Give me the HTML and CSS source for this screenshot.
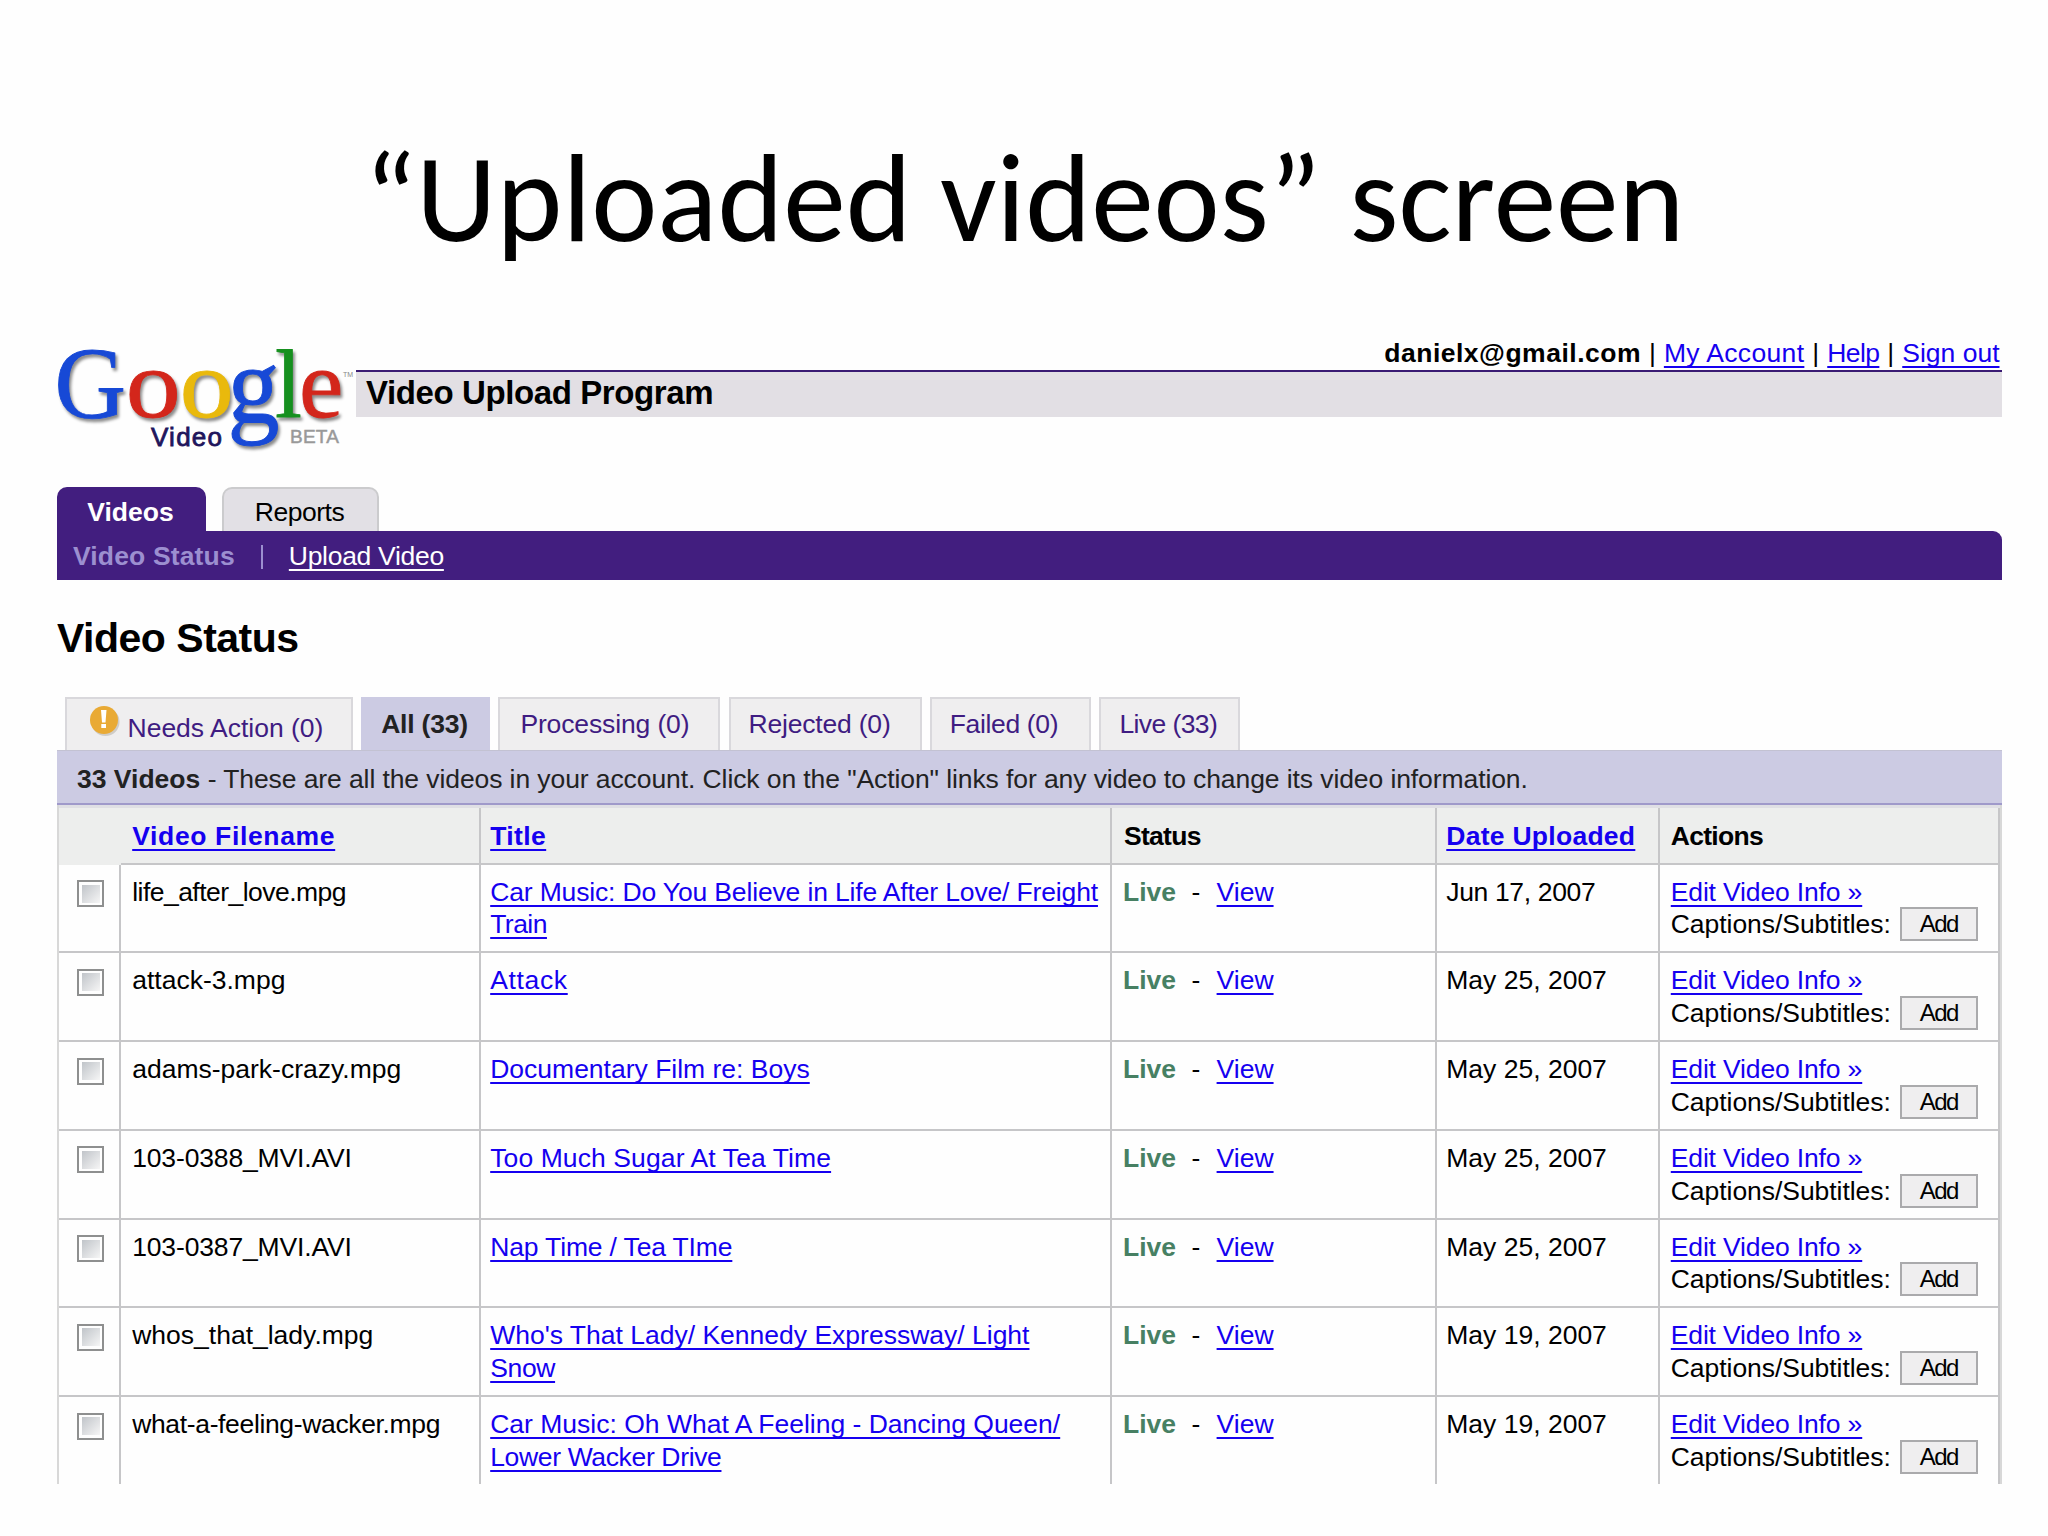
FILE: index.html
```html
<!DOCTYPE html>
<html lang="en">
<head>
    <meta charset="UTF-8">
    <meta name="viewport" content="width=device-width, initial-scale=1.0">
    <title>Video Upload Program</title>
    <link rel="stylesheet" href="styles.css">
</head>
<body>
    <h1 class="slide-title">“Uploaded videos” screen</h1>

    <div class="page">
        <header class="header">
            <svg class="logo" width="299" height="120" viewBox="0 0 299 120">
                <g class="logo-google">
                    <text class="blue" transform="translate(-2.500 78) scale(.99 1.01)">G</text>
                    <text class="red" transform="translate(68.800 77) scale(1.1 .97)">o</text>
                    <text class="yellow" transform="translate(122.800 77) scale(1.08 .97)">o</text>
                    <text class="blue" transform="translate(170.500 82.500) scale(1.04 1.1)">g</text>
                    <text class="green" transform="translate(218 76.500) scale(.97 .97)">l</text>
                    <text class="red" transform="translate(242 77) scale(1 .97)">e</text>
                </g>
                <text class="logo-video" x="94" y="106" textLength="71">Video</text>
                <text class="logo-beta" x="233" y="102.500" textLength="49">BETA</text>
                <text class="logo-tm" x="286" y="37">TM</text>
            </svg>
            <div class="header-main">
                <div class="account">
                    <b>danielx@gmail.com</b>
                    <span>|</span>
                    <a class="my-account" href="#">My Account</a>
                    <span>|</span>
                    <a class="help" href="#">Help</a>
                    <span>|</span>
                    <a href="#">Sign out</a>
                </div>
                <div class="program">Video Upload Program</div>
            </div>
        </header>

        <nav class="nav">
            <div class="nav-tab active">Videos</div>
            <div class="nav-tab reports">Reports</div>
        </nav>
        <div class="subnav">
            <b>Video Status</b>
            <span class="divider"></span>
            <a href="#">Upload Video</a>
        </div>

        <h2>Video Status</h2>

        <div class="tabs">
            <div class="tab needs-action">
                <svg class="warn" width="32" height="32" viewBox="0 0 32 32">
                    <circle cx="16.500" cy="17" r="14" fill="#b9b5ad" opacity=".6"/>
                    <circle cx="15" cy="15" r="14" fill="#e9aa35"/>
                    <path d="M12 5h5.500l-1 12.500h-3.500zM12.300 19h4.700v4h-4.700z" fill="#fff"/>
                </svg>
                <span>Needs Action (0)</span>
            </div>
            <div class="tab all">All (33)</div>
            <div class="tab processing">Processing (0)</div>
            <div class="tab rejected">Rejected (0)</div>
            <div class="tab failed">Failed (0)</div>
            <div class="tab live-tab">Live (33)</div>
        </div>
        <div class="info"><b>33 Videos</b> <span>- These are all the videos in your account. Click on the "Action" links for any video to change its video information.</span></div>

        <table class="videos">
            <thead>
                <tr>
                    <th></th>
                    <th><a class="wide" href="#">Video Filename</a></th>
                    <th><a class="title-link" href="#">Title</a></th>
                    <th class="narrow">Status</th>
                    <th><a class="date-link" href="#">Date Uploaded</a></th>
                    <th class="narrow">Actions</th>
                </tr>
            </thead>
            <tbody>
                <tr>
                    <td><i class="check"></i></td>
                    <td class="tight">life_after_love.mpg</td>
                    <td><a class="snug" href="#">Car Music: Do You Believe in Life After Love/ Freight<br><span class="tight">Train</span></a></td>
                    <td><b>Live</b> <i class="dash">-</i> <a href="#">View</a></td>
                    <td class="snug-more">Jun 17, 2007</td>
                    <td><a class="snug" href="#">Edit Video Info »</a><div class="captions">Captions/Subtitles: <button>Add</button></div></td>
                </tr>
                <tr>
                    <td><i class="check"></i></td>
                    <td>attack-3.mpg</td>
                    <td><a class="wide" href="#">Attack</a></td>
                    <td><b>Live</b> <i class="dash">-</i> <a href="#">View</a></td>
                    <td>May 25, 2007</td>
                    <td><a class="snug" href="#">Edit Video Info »</a><div class="captions">Captions/Subtitles: <button>Add</button></div></td>
                </tr>
                <tr>
                    <td><i class="check"></i></td>
                    <td>adams-park-crazy.mpg</td>
                    <td><a href="#">Documentary Film re: Boys</a></td>
                    <td><b>Live</b> <i class="dash">-</i> <a href="#">View</a></td>
                    <td>May 25, 2007</td>
                    <td><a class="snug" href="#">Edit Video Info »</a><div class="captions">Captions/Subtitles: <button>Add</button></div></td>
                </tr>
                <tr>
                    <td><i class="check"></i></td>
                    <td class="snug">103-0388_MVI.AVI</td>
                    <td><a class="loose" href="#">Too Much Sugar At Tea Time</a></td>
                    <td><b>Live</b> <i class="dash">-</i> <a href="#">View</a></td>
                    <td>May 25, 2007</td>
                    <td><a class="snug" href="#">Edit Video Info »</a><div class="captions">Captions/Subtitles: <button>Add</button></div></td>
                </tr>
                <tr>
                    <td><i class="check"></i></td>
                    <td class="snug">103-0387_MVI.AVI</td>
                    <td><a class="snug" href="#">Nap Time / Tea TIme</a></td>
                    <td><b>Live</b> <i class="dash">-</i> <a href="#">View</a></td>
                    <td>May 25, 2007</td>
                    <td><a class="snug" href="#">Edit Video Info »</a><div class="captions">Captions/Subtitles: <button>Add</button></div></td>
                </tr>
                <tr>
                    <td><i class="check"></i></td>
                    <td>whos_that_lady.mpg</td>
                    <td><a href="#">Who's That Lady/ Kennedy Expressway/ Light<br><span class="snug-more">Snow</span></a></td>
                    <td><b>Live</b> <i class="dash">-</i> <a href="#">View</a></td>
                    <td>May 19, 2007</td>
                    <td><a class="snug" href="#">Edit Video Info »</a><div class="captions">Captions/Subtitles: <button>Add</button></div></td>
                </tr>
                <tr>
                    <td><i class="check"></i></td>
                    <td class="snug-more">what-a-feeling-wacker.mpg</td>
                    <td><a href="#">Car Music: Oh What A Feeling - Dancing Queen/<br><span class="snug-more">Lower Wacker Drive</span></a></td>
                    <td><b>Live</b> <i class="dash">-</i> <a href="#">View</a></td>
                    <td>May 19, 2007</td>
                    <td><a class="snug" href="#">Edit Video Info »</a><div class="captions">Captions/Subtitles: <button>Add</button></div></td>
                </tr>
            </tbody>
        </table>
    </div>
</body>
</html>
```
FILE: styles.css
```css
* {
    margin: 0;
    padding: 0;
    box-sizing: border-box;
}

body {
    height: 1536px;
    overflow: hidden;
    background: #fefefe;
    color: #000;
    font-family: Arial, "Liberation Sans", sans-serif;
    font-size: 26.5px;
    line-height: 32.7px;
}

a {
    color: #1500f0;
    text-decoration: underline;
    text-decoration-thickness: 2px;
    text-underline-offset: 4px;
    text-decoration-skip-ink: none;
}

i {
    font-style: normal;
}

.slide-title {
    height: 333px;
    padding-top: 122px;
    text-align: center;
    font: normal 125.4px/153px Calibri, Carlito, Lato, sans-serif;
}

.page {
    width: 1944.5px;
    height: 1151px;
    margin-left: 57px;
    overflow: hidden;
}

/* header */
.header {
    display: flex;
    height: 154px;
}

.logo {
    flex: none;
    margin-top: 7px;
    overflow: visible;
}

.logo-google {
    font-family: "Liberation Serif", serif;
    font-size: 100px;
    stroke-width: 0.8px;
    filter: drop-shadow(2px 3px 1.5px rgba(0, 0, 0, 0.45));
}

.blue {
    fill: #1749d6;
    stroke: #1749d6;
}

.red {
    fill: #d3261b;
    stroke: #d3261b;
}

.yellow {
    fill: #e9b90c;
    stroke: #e9b90c;
}

.green {
    fill: #16901f;
    stroke: #16901f;
}

.logo-video {
    font-size: 26px;
    fill: #21155c;
    stroke: #21155c;
    stroke-width: 0.8px;
}

.logo-beta {
    font-size: 19px;
    fill: #999;
    stroke: #999;
    stroke-width: 0.5px;
}

.logo-tm {
    font-size: 7px;
    fill: #888;
}

.header-main {
    flex: 1;
}

.account {
    display: flex;
    justify-content: flex-end;
    gap: 8px;
    height: 37px;
    padding: 3.5px 2px 0 0;
}

.account b {
    letter-spacing: 0.5px;
}

.my-account {
    letter-spacing: 0.35px;
}

.help {
    letter-spacing: -0.6px;
}

.program {
    height: 47px;
    padding-left: 10px;
    border-top: 2px solid #3a1b73;
    background: #e2dfe4;
    font-size: 33px;
    font-weight: bold;
    line-height: 42px;
    letter-spacing: -0.4px;
}

/* main navigation */
.nav {
    display: flex;
    gap: 16px;
    height: 44px;
}

.nav-tab {
    width: 149px;
    padding-right: 2px;
    border-radius: 10px 10px 0 0;
    text-align: center;
    line-height: 50px;
}

.nav-tab.active {
    background: #421e7f;
    color: #fff;
    font-weight: bold;
}

.nav-tab.reports {
    width: 157px;
    border: 2px solid #cbcbcd;
    border-bottom: 0;
    background: #e2e0e5;
    line-height: 46px;
    letter-spacing: -0.5px;
}

.subnav {
    display: flex;
    align-items: center;
    height: 49px;
    padding: 2px 0 0 16px;
    border-radius: 0 9px 0 0;
    background: #421e7f;
    color: #9c8fd0;
}

.subnav b {
    letter-spacing: 0.15px;
}

.subnav a {
    color: #fff;
    letter-spacing: -0.3px;
}

.divider {
    width: 2px;
    height: 24px;
    margin: 0 26px;
    background: #9c8fd0;
}

h2 {
    height: 117px;
    padding-top: 34px;
    font-size: 41px;
    line-height: 48px;
    letter-spacing: -0.5px;
}

/* status filter tabs */
.tabs {
    display: flex;
    gap: 8.2px;
    height: 53px;
    padding-left: 8px;
}

.tab {
    padding-left: 20px;
    border: 2px solid #d9d8dc;
    border-bottom: 0;
    background: #efeeef;
    color: #3f1c82;
    line-height: 50px;
    white-space: nowrap;
}

.needs-action {
    display: flex;
    width: 288px;
    padding-left: 21.5px;
    line-height: 58px;
}

.warn {
    margin: 6px 7px 0 0;
}

.all {
    width: 129px;
    padding-left: 18px;
    border-color: #cccbe3;
    background: #cccbe3;
    color: #222;
    font-weight: bold;
    letter-spacing: -0.2px;
}

.processing {
    width: 222px;
    letter-spacing: -0.13px;
}

.rejected {
    width: 193px;
    padding-left: 18px;
    letter-spacing: -0.2px;
}

.failed {
    width: 161px;
    padding-left: 18px;
    letter-spacing: -0.35px;
}

.live-tab {
    width: 141px;
    padding-left: 18.5px;
    letter-spacing: -0.6px;
}

.info {
    height: 55px;
    padding-left: 20px;
    border-top: 1px solid #c3c2d2;
    border-bottom: 2px solid #9f99ca;
    background: #cccbe3;
    color: #222;
    line-height: 56px;
    white-space: nowrap;
}

.info span {
    letter-spacing: -0.09px;
}

/* video list */
.videos,
.videos thead,
.videos tbody {
    display: block;
}

.videos {
    border-left: 2px solid #d8d8d8;
    border-right: 2px solid #d8d8d8;
}

.videos tr {
    display: grid;
    grid-template-columns: 62.2px 359.5px 631.3px 324.8px 223.7px 1fr;
    height: 88.8px;
}

.videos thead tr {
    height: 59.5px;
    border-top: 3px solid #dfdfe4;
    background: #edeeed;
}

.videos th,
.videos td {
    padding: 11px 0 0 9.5px;
    border-right: 2px solid #c6c6c8;
    border-bottom: 2px solid #c6c6c8;
    text-align: left;
    white-space: nowrap;
}

.videos th {
    padding-top: 12px;
}

.videos th:nth-child(2),
.videos td:nth-child(2),
.videos td:nth-child(4) {
    padding-left: 11px;
}

.videos th:nth-child(4) {
    padding-left: 12px;
}

.videos th:nth-child(6),
.videos td:nth-child(6) {
    padding-left: 10.3px;
}

.videos th:first-child {
    border-color: transparent;
}

.videos td:first-child {
    padding: 15.5px 0 0 18px;
}

.check {
    display: block;
    width: 27px;
    height: 27px;
    border: 2px solid #8e8f8f;
    background: linear-gradient(135deg, #c0c4c9, #f6f6f6) content-box;
    padding: 2.5px;
}

.videos td b {
    color: #478063;
}

.dash {
    margin: 0 9px 0 8px;
}

.captions {
    display: flex;
    letter-spacing: -0.05px;
}

.captions button {
    width: 78px;
    height: 34px;
    margin: -1px 0 0 9px;
    border: 2px solid #aaaaac;
    background: #efeeef;
    font: 24px "Liberation Sans", sans-serif;
    letter-spacing: -1.5px;
}

/* letter spacing */
.wide {
    letter-spacing: 0.65px;
}

.title-link {
    letter-spacing: 0.4px;
}

.date-link {
    letter-spacing: 0.27px;
}

.loose {
    letter-spacing: 0.1px;
}

.snug {
    letter-spacing: -0.15px;
}

.snug-more {
    letter-spacing: -0.35px;
}

.tight {
    letter-spacing: -0.53px;
}

.narrow {
    letter-spacing: -0.7px;
}
```
